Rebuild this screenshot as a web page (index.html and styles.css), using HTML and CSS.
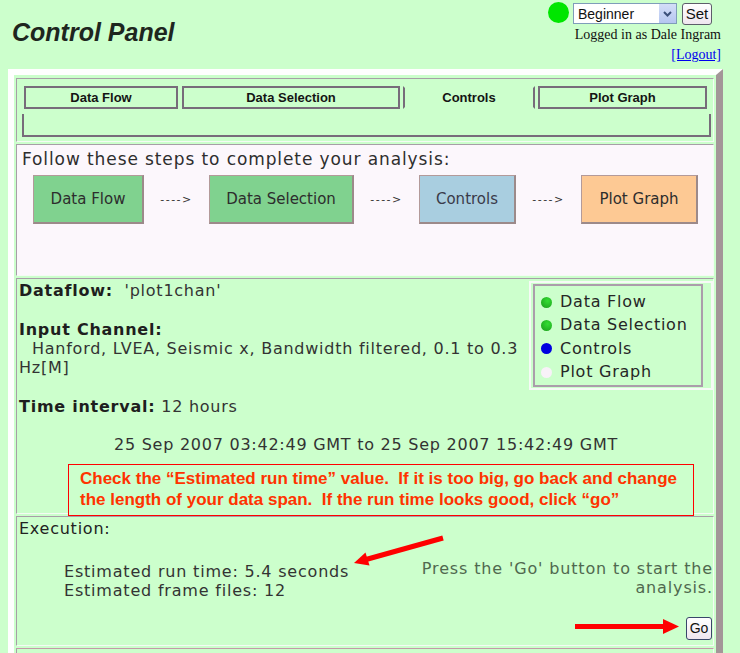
FILE: index.html
```html
<!DOCTYPE html>
<html>
<head>
<meta charset="utf-8">
<title>Control Panel</title>
<link rel="stylesheet" href="styles.css">
</head>
<body>
<div class="page">
  <header class="top">
    <h1 class="title">Control Panel</h1>
    <div class="user">
      <div class="level">
        <span class="status-dot"></span>
        <div class="select">
          <span class="select-text">Beginner</span>
          <span class="select-btn"><svg width="17" height="19" viewBox="0 0 17 19"><path d="M5 8 L8.5 11.5 L12 8" fill="none" stroke="#3b4f7a" stroke-width="2"/></svg></span>
        </div>
        <button class="btn set">Set</button>
      </div>
      <div class="login">Logged in as Dale Ingram</div>
      <a class="logout" href="#">[Logout]</a>
    </div>
  </header>

  <div class="panel">
    <div class="cell tabs-cell">
      <div class="tabs">
        <div class="tab tab-1">Data Flow</div>
        <div class="tab tab-2">Data Selection</div>
        <div class="tab tab-3 tab-active">Controls</div>
        <div class="tab tab-4">Plot Graph</div>
      </div>
      <div class="tab-body"></div>
    </div>

    <div class="cell steps">
      <p class="steps-lead">Follow these steps to complete your analysis:</p>
      <div class="flow">
        <div class="step step-green w1">Data Flow</div>
        <span class="flow-arrow">----&gt;</span>
        <div class="step step-green w2">Data Selection</div>
        <span class="flow-arrow">----&gt;</span>
        <div class="step step-blue w3">Controls</div>
        <span class="flow-arrow">----&gt;</span>
        <div class="step step-orange w4">Plot Graph</div>
      </div>
    </div>

    <div class="cell info">
      <div class="legend">
        <div class="legend-inner">
          <div class="legend-item"><span class="ball ball-green"></span>Data Flow</div>
          <div class="legend-item"><span class="ball ball-green"></span>Data Selection</div>
          <div class="legend-item"><span class="ball ball-blue"></span>Controls</div>
          <div class="legend-item"><span class="ball ball-white"></span>Plot Graph</div>
        </div>
      </div>
      <p class="line"><b>Dataflow:</b>&nbsp;&nbsp;'plot1chan'</p>
      <p class="line spaced"><b>Input Channel:</b></p>
      <p class="line indent">Hanford, LVEA, Seismic x, Bandwidth filtered, 0.1 to 0.3 Hz[M]</p>
      <p class="line spaced"><b>Time interval:</b> 12 hours</p>
      <p class="line spaced center">25 Sep 2007 03:42:49 GMT to 25 Sep 2007 15:42:49 GMT</p>
    </div>

    <div class="cell exec">
      <div class="line exec-title">Execution:</div>
      <div class="exec-row">
        <div class="estimates">Estimated run time: 5.4 seconds<br>Estimated frame files: 12</div>
        <div class="press">Press the 'Go' button to start the<br>analysis.</div>
      </div>
      <div class="go-row"><button class="btn go">Go</button></div>
    </div>

    <div class="cell next"></div>
  </div>

  <div class="note">Check the “Estimated run time” value.&nbsp; If it is too big, go back and change<br>the length of your data span.&nbsp; If the run time looks good, click “go”</div>

  <svg class="arrows" width="740" height="653" viewBox="0 0 740 653">
    <line x1="443" y1="538" x2="366" y2="559.5" stroke="#ff0000" stroke-width="5"/>
    <polygon points="354,563 369.5,565.5 365.5,552.5" fill="#ff0000"/>
    <line x1="575" y1="626.5" x2="666" y2="626.5" stroke="#ff0000" stroke-width="5"/>
    <polygon points="679,626.5 663,619 663,634" fill="#ff0000"/>
  </svg>
</div>
</body>
</html>
```

FILE: styles.css
```css
html {
  overflow: hidden;
}

* {
  box-sizing: border-box;
}

body {
  margin: 0;
  background: #ccffcc;
  font-family: "DejaVu Sans", sans-serif;
  color: #2a2a2a;
}

.page {
  position: relative;
  width: 740px;
}

/* Header */
.top {
  display: flex;
  justify-content: space-between;
  align-items: flex-start;
  height: 69px;
}

.title {
  margin: 0;
  padding: 18px 0 0 12px;
  font-family: "Liberation Sans", Arial, sans-serif;
  font-style: italic;
  font-weight: bold;
  font-size: 25px;
  line-height: 28px;
  color: #1e261e;
}

.user {
  display: flex;
  flex-direction: column;
  align-items: flex-end;
  padding-right: 19px;
}

.level {
  display: flex;
  align-items: center;
  margin-top: 2px;
  height: 23px;
  margin-right: 9px;
}

.status-dot {
  width: 21px;
  height: 21px;
  border-radius: 50%;
  background: #00e600;
  margin-right: 4px;
  margin-top: -2px;
}

.select {
  width: 104px;
  height: 21px;
  border: 1px solid #7f9db9;
  background: #ffffff;
  display: flex;
  align-items: center;
  justify-content: space-between;
  margin-right: 5px;
}

.select-text {
  font-family: "Liberation Sans", Arial, sans-serif;
  font-size: 14px;
  color: #111;
  padding-left: 4px;
}

.select-btn {
  width: 17px;
  height: 19px;
  background: linear-gradient(#d4def8, #b5c6f0);
  display: flex;
}

.btn {
  font-family: "Liberation Sans", Arial, sans-serif;
  color: #111;
  padding: 0;
  border-radius: 3px;
  background: linear-gradient(#ffffff, #efe6ef);
}

.set {
  width: 30px;
  height: 22px;
  font-size: 15px;
  border: 1px solid #5d5d6a;
}

.login {
  font-family: "Liberation Serif", "Times New Roman", serif;
  font-size: 14px;
  line-height: 20px;
  color: #111;
}

.logout {
  font-family: "Liberation Serif", "Times New Roman", serif;
  font-size: 14px;
  line-height: 20px;
  color: #0000ee;
}

/* Panel */
.panel {
  margin-left: 8px;
  width: 715px;
  border-style: solid;
  border-width: 6px 7px 7px 6px;
  border-color: #ffffff #a39698 #a39698 #ffffff;
  padding: 3px 2px 2px 2px;
  display: flex;
  flex-direction: column;
  gap: 2px;
}

.cell {
  border: 1px solid;
  border-color: #a79ea7 #f4fbf4 #f4fbf4 #a79ea7;
}

/* Tabs */
.tabs-cell {
  padding: 7px 2px 4px 5px;
}

.tabs {
  display: flex;
  margin: 0 4px 0 2px;
}

.tab {
  height: 23px;
  border: 2px solid #776c7a;
  font-family: "Liberation Sans", Arial, sans-serif;
  font-weight: bold;
  font-size: 13px;
  line-height: 19px;
  text-align: center;
  color: #141414;
}

.tab-1 { width: 154px; margin-right: 4px; }
.tab-2 { width: 218px; margin-right: 3px; }
.tab-3 { width: 132px; margin-right: 3px; }
.tab-4 { width: 169px; }

.tab-active {
  border-top-color: transparent;
  border-bottom-color: transparent;
}

.tab-body {
  margin-top: 5px;
  height: 23px;
  border: 2px solid #776c7a;
  border-top: none;
}

/* Steps */
.steps {
  background: #fcf7fc;
  padding: 5px 4px 51px 5px;
}

.steps-lead {
  margin: 0;
  font-size: 17px;
  letter-spacing: 0.9px;
  line-height: 19px;
  color: #2e2e2e;
}

.flow {
  display: flex;
  align-items: center;
  margin: 6px 0 0 11px;
}

.step {
  height: 49px;
  display: flex;
  align-items: center;
  justify-content: center;
  font-size: 15px;
  color: #2d2d2d;
  border: 1px solid #b39a9a;
  border-right: 2px solid #9c8a8a;
  border-bottom: 2px solid #9c8a8a;
}

.w1 { width: 111px; }
.w2 { width: 145px; }
.w3 { width: 97px; }
.w4 { width: 117px; }

.step-green { background: #80d28f; }
.step-blue { background: #a9cee0; color: #3a3a4a; }
.step-orange { background: #fdc994; }

.flow-arrow {
  width: 65px;
  text-align: center;
  font-size: 11px;
  letter-spacing: 1.5px;
  color: #333;
}

/* Info */
.info {
  padding: 2px 0 58px 2px;
}

.line {
  margin: 0;
  font-size: 16px;
  letter-spacing: 0.75px;
  line-height: 19.3px;
  color: #333;
}

.line b {
  color: #1e1e1e;
}

.spaced {
  margin-top: 19.3px;
}

.indent {
  text-indent: 13px;
}

.center {
  text-align: center;
}

.legend {
  float: right;
  width: 184px;
  border: 2px solid #f6faf6;
  padding: 1px 8px 1px 2px;
}

.legend-inner {
  border: 2px solid #ab9dab;
  padding: 4px 0 2px 6px;
}

.legend-item {
  display: flex;
  align-items: center;
  font-size: 16px;
  letter-spacing: 0.75px;
  line-height: 23.3px;
  color: #262626;
}

.ball {
  width: 11px;
  height: 11px;
  border-radius: 50%;
  margin-right: 8px;
  margin-top: 1px;
}

.ball-green { background: radial-gradient(circle at 60% 35%, #33dd33, #1a9a1a); }
.ball-blue { background: #0000e0; }
.ball-white { background: #f8f2f8; }

/* Execution */
.exec {
  padding: 2px 0 5px 2px;
}

.exec-title {
  color: #222;
}

.exec-row {
  display: flex;
  justify-content: space-between;
  align-items: flex-start;
  margin-top: 21px;
}

.estimates {
  margin-top: 3px;
  padding-left: 45px;
  font-size: 16px;
  letter-spacing: 0.8px;
  line-height: 19.3px;
  color: #333;
}

.press {
  text-align: right;
  font-size: 16px;
  letter-spacing: 0.85px;
  line-height: 19.3px;
  color: #50694f;
}

.go-row {
  display: flex;
  justify-content: flex-end;
  margin-top: 16px;
  padding-right: 1px;
}

.go {
  width: 26px;
  height: 23px;
  font-size: 14px;
  border: 1px solid #39466a;
}

.next {
  height: 40px;
  border-top-color: #c49aa8;
}

/* Annotations */
.note {
  position: absolute;
  left: 68px;
  top: 464px;
  width: 626px;
  height: 52px;
  border: 1px solid #ff0000;
  background: #ccffcc;
  padding: 3px 0 0 11px;
  font-family: "Liberation Sans", Arial, sans-serif;
  font-weight: bold;
  font-size: 17px;
  line-height: 21px;
  color: #ff3300;
  white-space: nowrap;
}

.arrows {
  position: absolute;
  left: 0;
  top: 0;
  pointer-events: none;
}
```
